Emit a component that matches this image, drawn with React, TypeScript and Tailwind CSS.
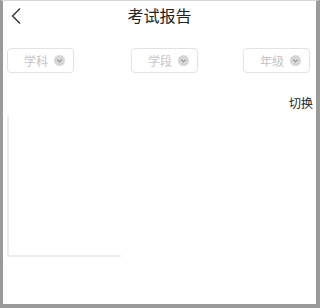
const filters = [
  { label: "学科", ml: "ml-[4px]" },
  { label: "学段", ml: "ml-[57px]" },
  { label: "年级", ml: "ml-[45px]" },
];

function Dropdown({ label, ml }: { label: string; ml: string }) {
  return (
    <div className={`${ml} flex h-[25px] w-[67px] items-center justify-between rounded-[4px] border border-[#e3e3e3] pl-[16px] pr-[8px]`}>
      <span className="text-[12px] text-[#c4c4c4]">{label}</span>
      <span className="flex h-[11px] w-[11px] items-center justify-center rounded-full bg-[#d6d6d6]">
        <svg width="7" height="7" viewBox="0 0 8 8" fill="none">
          <path d="M1.5 3 L4 5.5 L6.5 3" stroke="#8f8f8f" strokeWidth="1.3" />
        </svg>
      </span>
    </div>
  );
}

export default function App() {
  return (
    <div
      className="h-[308px] w-[320px] overflow-hidden border-t border-l-[3px] border-r-[4px] border-b-[4px] border-t-[#d8d8d8] border-l-[#9a9a9a] border-r-[#9a9a9a] border-b-[#9a9a9a] bg-white"
      style={{ fontFamily: '"Noto Sans CJK SC", "Liberation Sans", sans-serif' }}
    >
      <div className="relative flex h-[28px] items-center justify-center">
        <svg className="absolute left-[7px] top-[6px]" width="12" height="18" viewBox="0 0 12 18" fill="none">
          <path d="M10 1.5 L2.5 9 L10 16.5" stroke="#333" strokeWidth="1.4" />
        </svg>
        <span className="text-[16px] text-[#222]">考试报告</span>
      </div>
      <div className="mt-[19px] flex">
        {filters.map((f) => (
          <Dropdown key={f.label} label={f.label} ml={f.ml} />
        ))}
      </div>
      <div className="mt-[21px] flex justify-end pr-[3px]">
        <span className="text-[12px] text-[#222]">切换</span>
      </div>
      <div className="ml-[4px] mt-[4px] h-[141px] w-[114px] border-l-2 border-b-2 border-[#ececec]" />
    </div>
  );
}
